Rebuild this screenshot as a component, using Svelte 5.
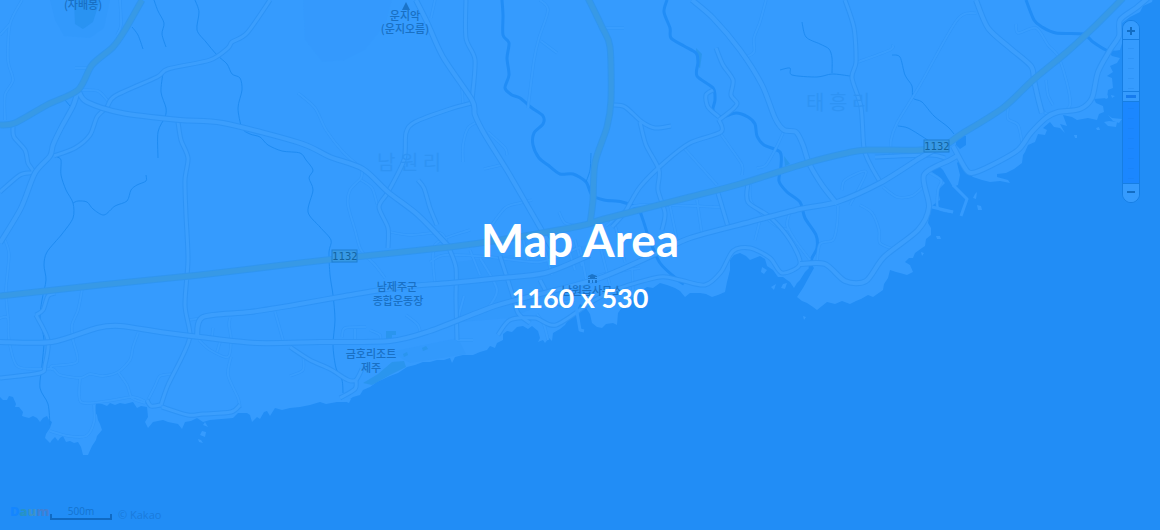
<script>
  const LEVELS = 14;
  let level = $state(9);
  let waterShare = $derived(((level - 1) / (LEVELS - 1)) * 100);

  // Turns a list of "x,y" points into a smooth curve that passes through each of them.
  function curve(points) {
    const p = points.split(' ').map((s) => s.split(',').map(Number));
    let d = `M${p[0][0]} ${p[0][1]}`;
    for (let i = 0; i < p.length - 1; i++) {
      const a = p[i - 1] ?? p[i];
      const b = p[i];
      const c = p[i + 1];
      const e = p[i + 2] ?? c;
      d += `C${b[0] + (c[0] - a[0]) / 7} ${b[1] + (c[1] - a[1]) / 7} ${c[0] - (e[0] - b[0]) / 7} ${c[1] - (e[1] - b[1]) / 7} ${c[0]} ${c[1]}`;
    }
    return d;
  }

  const coast =
    '-5,-5 -5,397 0,397 3,400 7,400 9,396 13,397 16,404 15,407 19,407 23,412 22,416 25,417 29,418 33,416 37,418 40,422 43,418 47,416 49,420 52,422 50,428 46,434 45,438 50,443 52,440 55,437 58,441 60,438 63,436 66,442 70,441 74,443 78,442 81,447 83,455 88,455 92,446 96,440 97,436 102,430 100,424 98,420 97,415 95,412 96,403 102,404 107,406 110,403 115,405 120,403 125,404 133,402 137,408 141,406 147,407 148,417 145,422 148,428 153,422 163,420 168,422 173,423 178,424 182,429 185,422 191,421 197,418 203,422 210,420 233,418 238,413 247,413 250,415 252,422 257,417 260,419 264,412 267,411 270,416 275,408 282,410 290,408 300,407 310,405 320,402 326,404 337,402 346,402 353,397 360,395 363,390 370,387 377,382 390,376 398,373 407,367 415,365 423,362 430,362 437,360 444,360 450,358 452,363 455,357 463,355 473,355 480,352 487,350 490,346 495,348 497,343 503,340 503,334 507,331 512,332 517,327 523,326 528,329 532,326 538,331 540,338 538,342 543,340 545,343 549,338 552,341 553,333 560,329 565,325 568,320 573,316 577,310 580,304 586,308 590,314 592,323 597,327 602,328 606,324 613,323 617,325 618,313 623,306 628,305 632,298 637,293 647,287 653,288 660,283 667,285 675,288 680,291 685,297 690,293 700,293 706,294 712,297 718,295 725,292 727,282 730,270 730,260 734,255 740,253 746,256 750,260 755,258 760,256 765,259 767,266 773,270 778,277 783,277 787,280 790,282 794,288 797,283 800,280 805,272 812,265 814,268 809,277 803,288 797,297 802,301 807,303 813,307 817,310 822,306 827,302 835,304 842,301 850,304 856,301 861,299 868,295 873,297 883,290 884,284 888,278 890,270 896,272 900,273 907,275 913,272 910,265 905,262 909,258 913,258 915,253 922,248 925,246 926,239 931,235 931,228 928,223 930,210 933,205 940,200 938,190 945,183 938,176 932,172 932,167 937,164 943,170 947,177 953,187 958,185 960,175 957,163 959,161 965,170 973,177 982,180 990,182 1000,181 1010,183 1008,180 997,177 997,174 1006,173 1014,169 1022,163 1023,155 1025,152 1028,145 1035,142 1038,134 1045,135 1047,130 1043,128 1050,122 1054,127 1060,128 1065,133 1060,124 1067,126 1063,115 1072,117 1077,120 1088,118 1097,120 1099,114 1104,112 1103,106 1096,103 1094,99 1107,98 1108,90 1113,88 1112,78 1107,76 1113,72 1110,66 1117,63 1120,58 1112,56 1108,52 1120,50 1123,40 1122,23 1130,17 1134,15 1140,12 1143,6 1152,2 1154,-5';

  const islets = [
    '345,397 351,399 349,403 344,401',
    '205,422 208,427 203,425',
    '202,431 206,432 205,437 200,435',
    '198,439 201,440 203,443 199,442',
    '762,267 767,270 764,274 761,272',
    '783,284 787,283 785,289 781,288',
    '771,287 776,284 774,290',
    '803,316 806,317 804,320',
    '977,205 981,206 982,210 978,210',
    '975,194 977,192 976,199 973,198',
    '936,236 940,236 941,239 937,239',
    '921,252 924,253 922,256',
    '1108,115 1112,118 1122,119 1119,123 1113,121',
    '1104,122 1109,121 1117,122 1116,127 1108,126',
    '1096,128 1099,127 1100,130 1097,130',
    '1074,135 1077,135 1077,138 1075,138',
    '1104,97 1108,95 1108,98 1106,99',
    '1111,95 1115,96 1112,98'
  ];

  const rivers = [
    '502,0 503,15 503,35 509,43 507,58 509,75 505,88 512,95 520,98 532,108 543,116 543,124 534,133 533,145 539,158 548,165 560,174 573,174 586,182 592,195 604,200 622,202 638,209 643,220 649,238 660,263 678,280 684,284',
    '667,0 664,12 670,28 671,38 684,46 696,53 698,62 697,76 713,88 715,100 713,110 721,117 736,113 748,117 755,124 757,136 764,145 780,152 781,166 779,181 787,192 800,202 805,218 816,235 817,248 812,258 810,268',
    '1026,0 1034,20 1042,27 1056,33 1083,34 1093,42 1106,50 1118,53'
  ];

  const streams = [
    '195,0 199,12 197,30 206,42 217,55 227,64 232,74 240,78 242,90 238,108 242,128 250,134 260,137 268,145 282,151 300,153 306,160 313,170 309,178 313,190 308,212 320,227 331,240 329,252 330,275 333,295 335,320 333,345 336,368 342,380 343,393',
    '57,157 61,160 61,175 66,190 73,203 73,218 62,234 47,252 44,265 46,280 42,300 40,318 44,340 42,365 40,388 48,404 50,425',
    '73,203 78,201 87,202 93,209 104,215 115,206 127,201 131,190 137,185 146,181 146,175',
    '154,0 158,11 164,23 162,34 166,47',
    '132,27 138,35 143,49',
    '163,73 161,92 166,108 165,117 158,132 158,158',
    '65,100 70,106',
    '780,70 790,68 792,75 817,77 832,74 850,76',
    '802,22 806,37 820,44 829,49 832,58 832,73',
    '892,55 900,57 905,75 912,86 913,98 922,102 934,116 948,127 954,134',
    '898,126 908,128 923,137 935,145',
    '591,153 590,170 586,182'
  ];

  const yellowRoads = [
    '142,0 125,30 113,47 92,65 78,90 47,105 15,123 0,125',
    '588,-2 602,27 610,47 611,100 607,127 595,163 593,200 590,224',
    '0,296 100,285 200,275 300,263 345,258 450,247 500,240 580,226 604,219 690,197 740,184 807,163 847,153 867,150 920,150 945,145 960,135 1003,108 1033,80 1067,52 1093,28 1123,-2'
  ];

  const mainRoads = [
    '78,90 73,106 61,128 53,145 50,156 35,173 21,208 0,243',
    '79,92 87,102 122,113 180,120 223,123 300,143 330,157 363,169 388,192 418,215 448,246',
    '416,0 427,22 443,57 472,100 475,115 485,135 508,172 530,210 552,248',
    '0,342 52,342 97,328 120,326 160,332 200,337 257,343 320,342 390,341 430,331 495,306 540,294 600,278 660,252 690,238 750,222 800,209 837,202 880,183 920,158 936,149',
    '197,337 203,317 250,312 300,304 345,296 400,287 450,283 500,278 545,273 590,255',
    '692,0 713,18 740,50 762,85 775,118 784,130 796,132 803,145 809,163 822,185 837,204',
    '976,0 988,28 1010,48 1031,66 1034,80 1038,98 1042,113',
    '953,146 965,168 972,173 990,166 1018,150 1030,134 1046,118 1058,112 1080,109 1092,98 1098,72 1110,50 1119,36 1120,20 1136,8 1148,-2',
    '800,264 825,264 845,281 866,281 884,257 918,230 929,207 924,175 950,160 957,156'
  ];

  const midRoads = [
    '270,0 247,33 232,42 228,48 210,60 168,69 157,77 115,96 107,107 97,117 90,135 75,148 54,156',
    '178,122 181,140 188,158 185,180 186,215 188,260 185,305 190,335 183,355 168,385 161,405',
    '472,103 450,109 415,122 406,133 404,160 388,192 379,207 388,228 388,248',
    '466,-2 466,38 475,60 472,100',
    '613,105 625,107 642,122 655,128 671,126',
    '719,120 721,132 690,143 665,162 640,187 625,212 612,227',
    '719,120 733,109 737,103 731,95 733,80 723,65 716,48',
    '719,117 708,107 706,95 713,90',
    '845,0 854,28 856,62 852,78 861,107 864,148 871,166 882,185',
    '13,127 14,137 25,150 28,163 33,172 20,175 0,192',
    '449,248 456,268 456,300 457,340',
    '748,183 748,202 770,217 790,240 800,264 782,273 770,258 750,248 733,251 721,272 705,285 680,280 660,277 620,288 593,301 556,325 535,318 510,320 498,335',
    '718,193 729,230',
    '640,122 646,145 659,170 658,190 665,213 662,230',
    '290,347 310,360 330,369 348,380 356,380 362,369',
    '356,380 355,389 340,398',
    '161,405 151,406 147,400',
    '162,407 188,415 203,414 231,412 240,405',
    '36,315 48,340 45,365 40,373 0,378',
    '55,293 48,296 43,310 36,315',
    '875,157 930,155 945,158',
    '540,280 552,300 570,307',
    '500,256 512,293 518,313 530,323',
    '418,180 424,188 430,208 437,225'
  ];

  const smallRoads = [
    '22,0 10,24 8,60 13,80 5,95 5,120', '0,35 10,24', '5,240 9,255 6,290 8,318', '120,0 121,25 117,35',
    '75,68 92,68', '82,90 98,91 108,101', '0,318 8,318 9,340 17,366 40,369 53,369 60,375 80,378 90,374 103,376 118,372 130,360 133,347 138,333',
    '118,372 127,385 132,398 145,403', '82,290 78,310 72,325 73,340 77,362 52,366 53,370', '80,378 81,402 108,401 133,397 148,403',
    '94,405 94,422 86,436 68,436 50,431', '148,400 155,386 160,376 172,374', '189,320 203,318', '199,340 210,350 228,357 231,340 229,325 230,318',
    '231,357 228,375 238,398 240,408', '275,312 283,340', '213,328 212,337', '217,352 220,342',
    '298,93 315,108 326,130 343,152 360,167', '362,170 361,178 350,190 348,205 355,230 361,250 375,265 385,278', '361,180 372,188 377,204',
    '435,0 431,18', '477,122 468,128 463,145 463,162', '488,132 505,148 507,155', '484,169 501,165',
    '462,88 463,105', '489,229 505,208 520,203 532,200', '390,232 410,235 440,233 448,245', '540,0 548,10 539,38 534,60 528,108', '541,41 557,53',
    '605,28 624,28', '766,0 760,22 754,38 754,52 746,57', '757,168 766,165 776,148 783,133', '720,133 730,147 742,165 742,175',
    '684,148 717,185', '606,226 620,215 640,205 720,207', '670,206 678,245', '697,200 702,235', '750,183 752,203 775,225 790,230',
    '858,62 890,50 893,45', '976,13 957,20 920,85 897,123 891,140 891,156', '1016,24 1018,33 1036,28 1048,45 1060,60 1070,105 1047,114 1037,98',
    '1046,80 1048,95 1053,105', '1008,108 1008,119 1018,125 1022,142', '842,190 845,180 866,172 850,205', '860,205 872,213 879,230 880,243 893,249',
    '883,187 897,197 912,196 923,187', '924,170 941,180 938,190 938,208 953,212', '838,206 837,225 833,240 820,244 817,262',
    '790,212 787,225 795,240 810,260', '760,220 755,240', '435,285 435,245 470,230', '470,250 480,275', '480,258 497,290 485,312',
    '406,315 418,325 421,337', '342,337 345,328 366,327', '355,339 355,329', '370,330 380,335 380,342', '290,376 303,370 303,355',
    '457,340 473,340', '458,318 464,296', '520,225 528,260', '545,250 552,275', '567,243 575,270', '575,240 582,266',
    '430,262 445,255 490,257 540,262 580,247', '560,290 600,275 640,268', '580,247 588,290', '615,225 625,262', '600,245 610,285',
    '632,262 633,290', '559,212 565,223 578,226', '550,305 575,300', '537,314 544,325 548,340'
  ];

  const roadLayers = [
    { name: 'small', lines: smallRoads.map(curve) },
    { name: 'mid', lines: midRoads.map(curve) },
    { name: 'main', lines: mainRoads.map(curve) },
    { name: 'yellow', lines: yellowRoads.map(curve) }
  ];
</script>

<main class="map">
  <svg class="canvas" viewBox="0 0 1160 530" role="img" aria-label="Map">
    <polygon class="land" points={coast} />
    {#each islets as islet}
      <polygon class="land" points={islet} />
    {/each}

    <!-- Relief and parks -->
    <path class="relief" d="M50 0 55 20 64 36 90 38 104 28 110 0Z" />
    <path class="hill" d="M74 0 75 24 83 29 93 22 100 0Z" />
    <path class="relief faint" d="M303 0 305 40 322 62 345 60 365 50 385 25 392 0Z" />
    <path class="relief" d="M456 262 590 245 590 285 510 318 460 322Z" />
    <path class="park" d="M363 383 378 374 392 362 404 361 406 367 390 375 372 385Z" />
    <path class="relief" d="M390 352 458 338 466 354 410 363Z" />
    <path class="park" d="M403 354l4-2 1 3-4 2zM422 348l4-2 2 3-5 2zM386 331h10v4h-4v5h-6z" opacity=".5" />
    <path class="park" d="M696 48 702 54 700 68 697 66ZM784 156 790 164 785 166Z" />
    <path class="water" d="M956 136h10v9l-6 4-4-4z" />

    {#each rivers as river}
      <path class="river" d={curve(river)} />
    {/each}
    {#each streams as stream}
      <path class="stream" d={curve(stream)} />
    {/each}

    {#each roadLayers as layer}
      {#each layer.lines as line}
        <path class="casing {layer.name}" d={line} />
      {/each}
      {#each layer.lines as line}
        <path class="surface {layer.name}" d={line} />
      {/each}
    {/each}

    <!-- Piers -->
    <path class="pier" d="M953 185 967 199 961 216M932 207 953 212M576 306 580 330 584 331" />

    <g class="district">
      <text x="377" y="170">남 원 리</text>
      <text x="806" y="110">태 흥 리</text>
    </g>

    <g class="place">
      <text x="83" y="9">(자배봉)</text>
      <path class="mark" d="M406 2 410 10H402Z" />
      <text x="405" y="20">운지악</text>
      <text x="405" y="33">(운지오름)</text>
      <text x="397" y="291">남제주군</text>
      <text x="398" y="305">종합운동장</text>
      <text x="371" y="358">금호리조트</text>
      <text x="371" y="372">제주</text>
      <text x="592" y="295">남원읍사무소</text>
      <path class="mark" d="M588 277V276L592 274 597 276V277H595V278H597V279H588V278H590V277ZM588 280h2v3h-2zM592 280h1v3h-1zM595 280h2v3h-2z" />
    </g>

    <g class="shield">
      <rect x="332" y="250" width="25" height="12" />
      <text x="345" y="260">1132</text>
      <rect x="924" y="140" width="25" height="12" />
      <text x="937" y="150">1132</text>
    </g>
  </svg>

  <div class="caption">
    <h1>Map Area</h1>
    <p>1160 x 530</p>
  </div>

  <div class="zoom" style="--share: {waterShare}%">
    <button class="plus" aria-label="Zoom in" onclick={() => (level = Math.min(LEVELS, level + 1))}>
      <svg viewBox="0 0 16 18"><path d="M4 10H12M8 6V14" /></svg>
    </button>
    <input type="range" min="1" max={LEVELS} bind:value={level} aria-label="Zoom level" />
    <button class="minus" aria-label="Zoom out" onclick={() => (level = Math.max(1, level - 1))}>
      <svg viewBox="0 0 16 18"><path d="M4 8H12" /></svg>
    </button>
  </div>

  <footer class="credits">
    <span class="logo"><b>D</b><b>a</b><b>u</b><b>m</b></span>
    <span class="scale">500m</span>
    <span class="copyright">© Kakao</span>
  </footer>
</main>

<style>
  :global(body) {
    margin: 0;
    background: #218df6;
  }

  .map {
    position: relative;
    overflow: hidden;
    background: #218df6;
    font-family: 'Open Sans', 'Noto Sans CJK KR', sans-serif;
  }

  .canvas {
    display: block;
    width: 100%;
    height: auto;
  }

  .land {
    fill: #359bfe;
  }

  .water {
    fill: #218df6;
  }

  .relief {
    fill: #2e94f8;
    opacity: 0.35;
  }

  .relief.faint {
    opacity: 0.15;
  }

  .hill {
    fill: #2590ee;
    opacity: 0.7;
  }

  .park {
    fill: #2893ea;
    opacity: 0.8;
  }

  .river,
  .stream,
  .casing,
  .surface,
  .pier {
    fill: none;
    stroke-linejoin: round;
    stroke-linecap: butt;
  }

  .river {
    stroke: #218df6;
    stroke-width: 3px;
  }

  .stream {
    stroke: #1e8bf2;
    stroke-width: 1px;
  }

  .pier {
    stroke: #359bfe;
    stroke-width: 3px;
  }

  .casing {
    stroke: #2d93f6;
  }

  .surface {
    stroke: #3b9efd;
  }

  .casing.small {
    stroke: #2f95f9;
    stroke-width: 3px;
  }

  .surface.small {
    stroke: #389dfe;
    stroke-width: 2px;
  }

  .casing.mid {
    stroke-width: 5px;
  }

  .surface.mid {
    stroke-width: 3px;
  }

  .casing.main {
    stroke-width: 6px;
  }

  .surface.main {
    stroke-width: 4px;
  }

  .casing.yellow {
    stroke: #3095ef;
    stroke-width: 7px;
  }

  .surface.yellow {
    stroke: #3799e6;
    stroke-width: 5px;
  }

  .district {
    font: 400 20px 'Noto Sans CJK KR', sans-serif;
    fill: #2e93f4;
  }

  .place {
    font: 500 11px 'Noto Sans CJK KR', sans-serif;
    fill: #1970c4;
    text-anchor: middle;
  }

  .mark {
    fill: #1b74c9;
  }

  .shield rect {
    fill: #3799e6;
    stroke: #1f7fd2;
  }

  .shield text {
    font: 400 10px 'DejaVu Sans', sans-serif;
    fill: #12639f;
    text-anchor: middle;
  }

  .caption {
    position: absolute;
    inset: 0;
    display: flex;
    flex-direction: column;
    align-items: center;
    justify-content: center;
    padding-top: 6px;
    color: #fff;
    font-family: Lato, 'Open Sans', sans-serif;
    pointer-events: none;
  }

  h1,
  p {
    margin: 0;
    font-weight: 700;
  }

  h1 {
    font-size: 46px;
    line-height: 60px;
  }

  p {
    font-size: 27px;
    line-height: 56px;
  }

  .zoom {
    position: absolute;
    top: 20px;
    right: 20px;
    display: flex;
    flex-direction: column;
    box-sizing: border-box;
    width: 18px;
    overflow: hidden;
    border: 1px solid #167ee3;
    border-radius: 9px;
    background: #359bfe;
  }

  .zoom button {
    display: block;
    width: 16px;
    height: 18px;
    padding: 0;
    border: 0;
    background: #359bfe;
  }

  .zoom button svg {
    display: block;
    fill: none;
    stroke: #126dc4;
    stroke-width: 2px;
  }

  .zoom input {
    appearance: none;
    writing-mode: vertical-lr;
    direction: rtl;
    box-sizing: border-box;
    width: 16px;
    height: 145px;
    margin: 0;
    border: solid #167ee3;
    border-width: 1px 0;
    background:
      repeating-linear-gradient(transparent 0 8px, #1976dc33 8px 9px, transparent 9px 10px) 5px 0 / 6px 10px repeat-y,
      linear-gradient(to top, #1b87ff var(--share), #359bfe var(--share));
  }

  .zoom input::-webkit-slider-thumb {
    appearance: none;
    box-sizing: border-box;
    width: 16px;
    height: 11px;
    border: solid #167ee3;
    border-width: 1px 0;
    border-radius: 0;
    background: linear-gradient(#167bee, #167bee) center / 10px 3px no-repeat #359bfe;
  }

  .credits {
    position: absolute;
    bottom: 6px;
    left: 10px;
    display: flex;
    align-items: flex-end;
    gap: 6px;
    color: #1473ce;
    font-size: 11px;
    line-height: 18px;
  }

  .logo {
    display: flex;
    width: 34px;
    font: 700 13px/18px 'Open Sans', sans-serif;
  }

  .logo b:nth-child(1) {
    color: #1486ff;
  }

  .logo b:nth-child(2) {
    color: #2793c5;
  }

  .logo b:nth-child(3) {
    align-self: flex-start;
    margin-bottom: 4px;
    color: #3c93c8;
  }

  .logo b:nth-child(4) {
    color: #4080d4;
  }

  .scale {
    box-sizing: border-box;
    width: 62px;
    height: 16px;
    margin-bottom: 4px;
    border-bottom: 2px solid #0f6ac4;
    background:
      linear-gradient(#0f6ac4, #0f6ac4) left bottom / 2px 4px no-repeat,
      linear-gradient(#0f6ac4, #0f6ac4) right bottom / 2px 4px no-repeat;
    font-size: 10px;
    line-height: 14px;
    text-align: center;
  }

  .copyright {
    color: #1a7bdc;
  }
</style>
